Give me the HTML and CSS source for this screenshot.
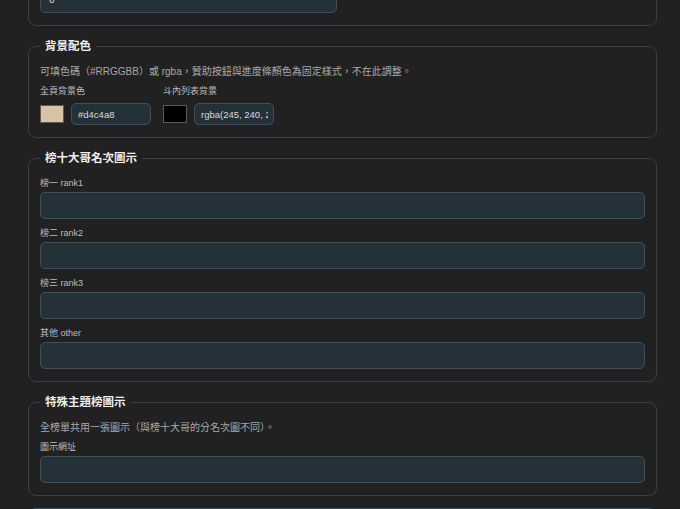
FILE: index.html
```html
<!DOCTYPE html>
<html lang="zh-Hant">
<head>
  <meta charset="UTF-8">
  <meta name="viewport" content="width=device-width, initial-scale=1.0">
  <title>榜單設定</title>
  <link rel="stylesheet" href="styles.css">
</head>
<body>

  <div class="settings">

    <fieldset class="group group-top">
      <input class="text-input short" type="text" value="0">
    </fieldset>

    <fieldset class="group">
      <legend>背景配色</legend>
      <p class="hint">可填色碼（#RRGGBB）或 rgba，贊助按鈕與進度條顏色為固定樣式，不在此調整。</p>
      <div class="color-row">
        <div class="color-field">
          <label class="field-label">全頁背景色</label>
          <div class="color-pick">
            <span class="swatch" style="background: #d4c4a8;"></span>
            <input class="text-input color-text" type="text" value="#d4c4a8">
          </div>
        </div>
        <div class="color-field">
          <label class="field-label">斗內列表背景</label>
          <div class="color-pick">
            <span class="swatch" style="background: #000;"></span>
            <input class="text-input color-text" type="text" value="rgba(245, 240, 235, 0.9)">
          </div>
        </div>
      </div>
    </fieldset>

    <fieldset class="group">
      <legend>榜十大哥名次圖示</legend>
      <div class="field">
        <label class="field-label">榜一 rank1</label>
        <input class="text-input" type="text">
      </div>
      <div class="field">
        <label class="field-label">榜二 rank2</label>
        <input class="text-input" type="text">
      </div>
      <div class="field">
        <label class="field-label">榜三 rank3</label>
        <input class="text-input" type="text">
      </div>
      <div class="field">
        <label class="field-label">其他 other</label>
        <input class="text-input" type="text">
      </div>
    </fieldset>

    <fieldset class="group">
      <legend>特殊主題榜圖示</legend>
      <p class="hint">全榜單共用一張圖示（與榜十大哥的分名次圖不同）。</p>
      <div class="field">
        <label class="field-label">圖示網址</label>
        <input class="text-input" type="text">
      </div>
    </fieldset>

    <div class="save-bar"></div>

  </div>

</body>
</html>
```

FILE: styles.css
```css
* {
  box-sizing: border-box;
}

html, body {
  margin: 0;
  background-color: #212121;
  overflow: hidden;
}

body {
  font-family: "Liberation Sans", "Noto Sans CJK TC", sans-serif;
  color: #c9c9c9;
}

.settings {
  display: flex;
  flex-direction: column;
  gap: 12px;
  padding: 0 23px 0 28px;
}

.group {
  margin: 0;
  min-width: 0;
  padding: 10px 11px 12px;
  border: 1px solid #3a4046;
  border-radius: 8px;
}

/* 上一區塊只露出輸入框底部 */
.group-top {
  margin-top: -25px;
}

.group legend {
  padding: 0 5px;
  font-size: 11.5px;
  font-weight: 700;
  line-height: 16px;
  color: #f0f0f0;
}

.hint {
  margin: 0 0 4px;
  font-size: 10px;
  line-height: 16px;
  color: #a9a9a9;
}

.field-label {
  display: block;
  font-size: 9px;
  line-height: 14px;
  color: #bdbdbd;
  margin-bottom: 2px;
}

.field + .field {
  margin-top: 7px;
}

.text-input {
  display: block;
  width: 100%;
  height: 27px;
  padding: 0 8px;
  border: 1px solid #3e505b;
  border-radius: 5px;
  background-color: #253139;
  color: #dcdcdc;
  font-family: inherit;
  font-size: 10px;
  outline: none;
}

.text-input.short {
  width: 297px;
}

.color-row {
  display: flex;
  gap: 12px;
}

.color-field .field-label {
  margin-bottom: 5px;
}

.color-pick {
  display: flex;
  align-items: center;
  gap: 7px;
}

.swatch {
  width: 24px;
  height: 18px;
  border: 1px solid #5a5a5a;
}

.color-text {
  width: 80px;
  height: 22px;
  padding: 0 5px 0 6px;
  font-size: 9.5px;
}

.save-bar {
  height: 30px;
  border: 1px solid #3e505b;
  border-radius: 8px;
  background-color: #25313a;
}
```
